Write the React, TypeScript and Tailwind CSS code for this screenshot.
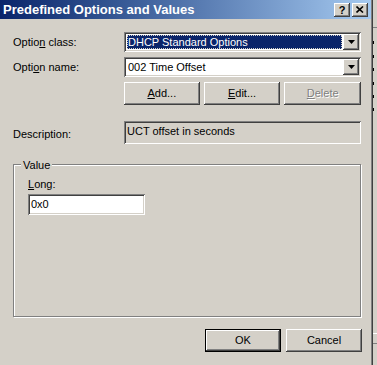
import * as React from 'react';

const raised =
  'shadow-[inset_-1px_-1px_#404040,inset_1px_1px_#ffffff,inset_-2px_-2px_#808080,inset_2px_2px_#d4d0c8]';
const sunken =
  'shadow-[inset_1px_1px_#808080,inset_-1px_-1px_#ffffff,inset_2px_2px_#404040,inset_-2px_-2px_#d4d0c8]';

const DropArrow = () => (
  <div className={`w-[16px] h-full bg-[#d4d0c8] flex items-center justify-center ${raised}`}>
    <svg width="7" height="4" viewBox="0 0 7 4">
      <path d="M0 0h7L3.5 4z" fill="#000" />
    </svg>
  </div>
);

const Combo = ({ value, focused }: { value: string; focused?: boolean }) => (
  <div className={`w-[237px] h-[20px] bg-white p-[2px] flex ${sunken}`}>
    <div className="flex-1 p-[1px] flex">
      <div
        className={
          focused
            ? 'flex-1 bg-[#0a246a] text-white outline-1 outline-dotted outline-[#d4d0c8] -outline-offset-1 pl-[1px] leading-[14px]'
            : 'flex-1 text-black pl-[1px] leading-[14px]'
        }
      >
        {value}
      </div>
    </div>
    <DropArrow />
  </div>
);

const Btn = ({
  children,
  disabled,
  def,
  className = '',
}: {
  children: React.ReactNode;
  disabled?: boolean;
  def?: boolean;
  className?: string;
}) => (
  <div
    className={`h-[23px] w-[76px] flex items-center justify-center bg-[#d4d0c8] ${
      def ? 'border border-black' : ''
    } ${raised} ${className}`}
  >
    <span
      className={
        disabled ? 'text-[#808080] [text-shadow:1px_1px_0_#ffffff]' : 'text-black'
      }
    >
      {children}
    </span>
  </div>
);

const TitleButton = ({ children }: { children: React.ReactNode }) => (
  <div className={`w-[16px] h-[14px] bg-[#d4d0c8] flex items-center justify-center ${raised}`}>
    {children}
  </div>
);

export default function App() {
  return (
    <div className="w-[377px] h-[365px] flex overflow-hidden bg-[#d4d0c8] font-['Liberation_Sans',Arial,sans-serif] text-[11px] text-black">
      {/* Dialog */}
      <div className="w-[373px] h-full flex flex-col border-r border-r-[#404040] shadow-[inset_-1px_0_#808080]">
        {/* Title bar */}
        <div className="h-[19px] mr-[1px] flex items-center justify-between bg-gradient-to-r from-[#0a246a] to-[#a6caf0] pl-[3px] pr-[3px]">
          <span className="text-white font-bold text-[13px]">Predefined Options and Values</span>
          <div className="flex items-center gap-[2px]">
            <TitleButton>
              <span className="font-bold text-[11px] leading-none mt-[1px]">?</span>
            </TitleButton>
            <TitleButton>
              <svg width="8" height="7" viewBox="0 0 8 7">
                <path d="M0.5 0.5L7 6.5M7 0.5L0.5 6.5" stroke="#000" strokeWidth="1.6" />
              </svg>
            </TitleButton>
          </div>
        </div>

        {/* Body */}
        <div className="flex-1 pl-[13px] pt-[13px] pr-[11px]">
          <div className="flex items-center">
            <span className="w-[111px]">
              Optio<span className="underline">n</span> class:
            </span>
            <Combo value="DHCP Standard Options" focused />
          </div>
          <div className="flex items-center mt-[5px]">
            <span className="w-[111px]">
              Opti<span className="underline">o</span>n name:
            </span>
            <Combo value="002 Time Offset" />
          </div>
          <div className="flex mt-[5px] ml-[111px] gap-[4px]">
            <Btn>
              <span className="underline">A</span>dd...
            </Btn>
            <Btn className="w-[77px]">
              <span className="underline">E</span>dit...
            </Btn>
            <Btn disabled className="w-[77px]">
              <span className="underline">D</span>elete
            </Btn>
          </div>

          <div className="flex items-center mt-[16px]">
            <span className="w-[111px] mt-[4px]">Description:</span>
            <div className={`w-[237px] h-[23px] px-[3px] pt-[3px] leading-[14px] ${sunken}`}>
              UCT offset in seconds
            </div>
          </div>

          {/* Value group */}
          <div className="relative mt-[20px] w-[348px] h-[153px] border border-[#808080] shadow-[inset_1px_1px_#ffffff,1px_1px_#ffffff] pl-[14px] pt-[11px]">
            <span className="absolute -top-[8px] left-[7px] px-[2px] bg-[#d4d0c8]">Value</span>
            <div>
              <span className="underline">L</span>ong:
            </div>
            <div className={`mt-[1px] w-[117px] h-[21px] bg-white px-[3px] pt-[3px] leading-[14px] ${sunken}`}>
              0x0
            </div>
          </div>

          <div className="flex justify-end gap-[5px] mt-[12px] mr-[-1px]">
            <Btn def>OK</Btn>
            <Btn>Cancel</Btn>
          </div>
        </div>
      </div>

      {/* Background window peeking at the right */}
      <div className="flex-1 h-full bg-[#d4d0c8] relative">
        <div className="absolute top-[27px] left-0 right-0 h-[1px] bg-[#808080]" />
        {[41, 55, 68, 82, 95, 108].map((t) => (
          <div key={t} className="absolute left-0 w-[1px] h-[3px] bg-black" style={{ top: t }} />
        ))}
        <div className="absolute top-[333px] left-0 right-0 h-[1px] bg-[#ffffff]" />
        <div className="absolute top-[343px] left-0 right-0 h-[1px] bg-[#808080]" />
      </div>
    </div>
  );
}
